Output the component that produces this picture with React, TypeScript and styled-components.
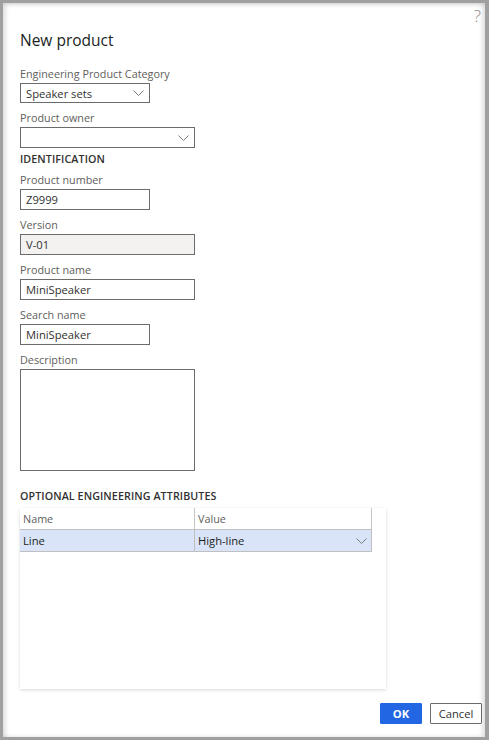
import React from "react";
import styled, { createGlobalStyle } from "styled-components";

const Global = createGlobalStyle`
  html, body { margin: 0; padding: 0; }
  body { font-family: "Open Sans", "Noto Sans", sans-serif; background: #a0a0a0; }
  * { box-sizing: border-box; }
`;

const Frame = styled.div`
  width: 489px;
  height: 740px;
  padding: 3px 4px 3px 3px;
  background: #a0a0a0;
`;

const Dialog = styled.div`
  position: relative;
  height: 100%;
  background: #ffffff;
  box-shadow: inset 3px 2px 4px rgba(0, 0, 0, 0.12), inset -3px 0 4px rgba(0, 0, 0, 0.12);
  padding: 26px 3px 0 17px;
  display: flex;
  flex-direction: column;
`;

const Help = styled.span`
  position: absolute;
  top: 2px;
  right: 4px;
  font-size: 17px;
  font-weight: 300;
  color: #8a8a8a;
  line-height: 22px;
`;

const Title = styled.h1`
  margin: 0;
  font-size: 15.5px;
  font-weight: 400;
  line-height: 22px;
  color: #201f1e;
`;

const Field = styled.div<{ $mt: number }>`
  display: flex;
  flex-direction: column;
  align-items: flex-start;
  margin-top: ${(p) => p.$mt}px;
`;

const Label = styled.label`
  font-size: 10.8px;
  line-height: 17px;
  color: #605e5c;
  margin-bottom: 1px;
`;

const Box = styled.div<{ $w: number; $h?: number; $ro?: boolean }>`
  width: ${(p) => p.$w}px;
  height: ${(p) => p.$h ?? 21}px;
  border: 1px solid #6b6b6b;
  background: ${(p) => (p.$ro ? "#f3f2f1" : "#ffffff")};
  display: flex;
  align-items: center;
  padding: 0 5px;
  font-size: 11.2px;
  color: #323130;
`;

const BoxText = styled.span`
  flex: 1;
`;

const Section = styled.div<{ $mt: number }>`
  margin-top: ${(p) => p.$mt}px;
  font-size: 10.7px;
  font-weight: 600;
  line-height: 16px;
  color: #323130;
  letter-spacing: 0.1px;
`;

const Chevron = ({ color = "#7a7a7a" }: { color?: string }) => (
  <svg width="11" height="6" viewBox="0 0 11 6">
    <path d="M0.5 0.5 L5.5 5.5 L10.5 0.5" fill="none" stroke={color} strokeWidth="1" />
  </svg>
);

const Card = styled.div`
  margin-top: 4px;
  width: 366px;
  height: 181px;
  background: #fff;
  box-shadow: 0 1px 3px rgba(0, 0, 0, 0.16);
`;

const Grid = styled.div`
  width: 352px;
  display: grid;
  grid-template-columns: 175px 177px;
`;

const HeadCell = styled.div`
  height: 22px;
  display: flex;
  align-items: center;
  padding-left: 3px;
  font-size: 10.8px;
  color: #605e5c;
  border-right: 1px solid #c8c6c4;
  border-bottom: 1px solid #c0c0c0;
`;

const RowCell = styled.div`
  height: 22px;
  display: flex;
  align-items: center;
  padding: 0 4px 0 3px;
  font-size: 11.2px;
  color: #201f1e;
  background: #d9e4f8;
  border-right: 1px solid #c0c0c0;
  border-bottom: 1px solid #c0c0c0;
`;

const Footer = styled.div`
  margin-top: 14px;
  display: flex;
  justify-content: flex-end;
  gap: 8px;
`;

const Button = styled.button<{ $primary?: boolean }>`
  height: 21px;
  padding: 0;
  font-family: inherit;
  font-size: 11.2px;
  font-weight: ${(p) => (p.$primary ? 700 : 400)};
  width: ${(p) => (p.$primary ? 42 : 52)}px;
  background: ${(p) => (p.$primary ? "#2266e3" : "#ffffff")};
  color: ${(p) => (p.$primary ? "#ffffff" : "#323130")};
  border: 1px solid ${(p) => (p.$primary ? "#2266e3" : "#6b6b6b")};
  border-radius: 1px;
`;

export default function App() {
  return (
    <>
      <Global />
      <Frame>
        <Dialog>
          <Help>?</Help>
          <Title>New product</Title>

          <Field $mt={14}>
            <Label>Engineering Product Category</Label>
            <Box $w={130} $h={20}>
              <BoxText>Speaker sets</BoxText>
              <Chevron />
            </Box>
          </Field>

          <Field $mt={6}>
            <Label>Product owner</Label>
            <Box $w={175}>
              <BoxText />
              <Chevron />
            </Box>
          </Field>

          <Section $mt={3}>IDENTIFICATION</Section>

          <Field $mt={4}>
            <Label>Product number</Label>
            <Box $w={130}>
              <BoxText>Z9999</BoxText>
            </Box>
          </Field>

          <Field $mt={6}>
            <Label>Version</Label>
            <Box $w={175} $ro>
              <BoxText>V-01</BoxText>
            </Box>
          </Field>

          <Field $mt={6}>
            <Label>Product name</Label>
            <Box $w={175}>
              <BoxText>MiniSpeaker</BoxText>
            </Box>
          </Field>

          <Field $mt={6}>
            <Label>Search name</Label>
            <Box $w={130}>
              <BoxText>MiniSpeaker</BoxText>
            </Box>
          </Field>

          <Field $mt={6}>
            <Label>Description</Label>
            <Box $w={175} $h={102} />
          </Field>

          <Section $mt={17}>OPTIONAL ENGINEERING ATTRIBUTES</Section>

          <Card>
            <Grid>
              <HeadCell>Name</HeadCell>
              <HeadCell>Value</HeadCell>
              <RowCell>Line</RowCell>
              <RowCell>
                <BoxText>High-line</BoxText>
                <Chevron />
              </RowCell>
            </Grid>
          </Card>

          <Footer>
            <Button $primary>OK</Button>
            <Button>Cancel</Button>
          </Footer>
        </Dialog>
      </Frame>
    </>
  );
}
